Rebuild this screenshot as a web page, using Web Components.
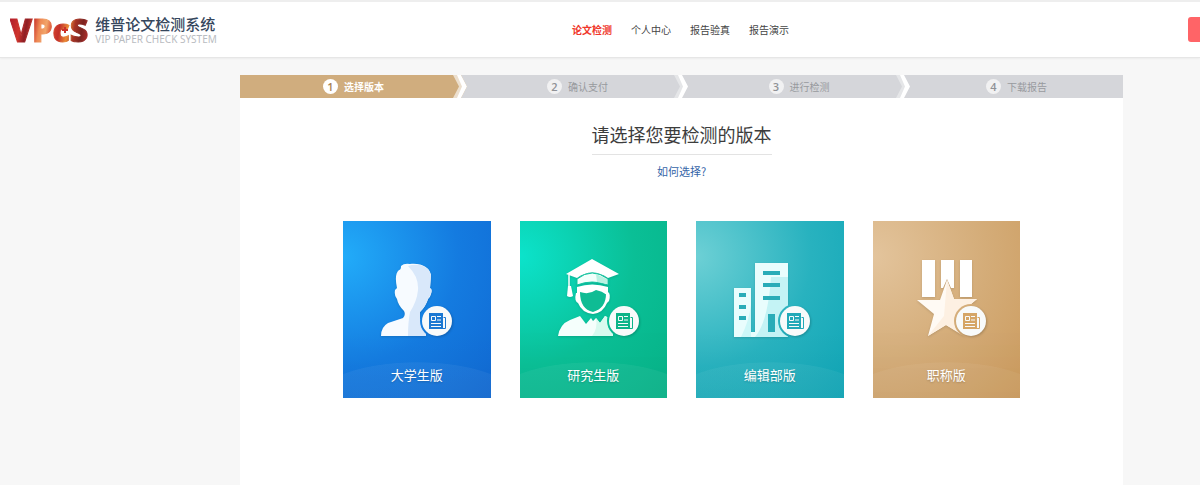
<!DOCTYPE html>
<html lang="zh-CN">
<head>
<meta charset="utf-8">
<meta name="viewport" content="width=device-width, initial-scale=1">
<title>维普论文检测系统</title>
<style>
body{margin:0;min-height:100vh;background:#f7f7f7;color:#444;font:10px/16px "Noto Sans CJK SC","Noto Sans",sans-serif}
</style>
</head>
<body>
<vp-page></vp-page>
<script>
class Base extends HTMLElement{
  constructor(){super();this.attachShadow({mode:'open'})}
  connectedCallback(){this.shadowRoot.innerHTML=this.render()}
}

class VpLogo extends Base{
  render(){return `<style>
    :host{display:block}
    a{display:flex;align-items:center;gap:7px;text-decoration:none}
    .mark{position:relative;display:flex;align-items:baseline;font:800 32px/34px "Open Sans","Noto Sans",sans-serif;
      color:transparent;-webkit-text-stroke:1px transparent;background:linear-gradient(100deg,#b3202c 3%,#d0342c 14%,#8e1f25 22%,#c9342a 30%,#ee8a55 38%,#f1a56a 46%,#d8452d 54%,#c22f2a 62%,#ea8a35 72%,#a83424 80%,#7c2420 89%,#b02d2a 98%);
      -webkit-background-clip:text;background-clip:text}
    svg{position:absolute;left:51px;top:13px;width:8px;height:8px}
    .t{display:block;font-size:15px;line-height:18px;font-weight:500;color:#35465c}
    .s{display:block;font:10px/12px "Noto Sans",sans-serif;color:#b9bcc1;white-space:nowrap}
  </style>
  <a href="#"><span class="mark">VPcS<svg viewBox="0 0 8 8" aria-hidden="true"><path d="M4 1v6M1 4h6" stroke="#cb3129" stroke-width="2"/></svg></span>
  <span><span class="t">维普论文检测系统</span><span class="s">VIP PAPER CHECK SYSTEM</span></span></a>`}
}
customElements.define('vp-logo',VpLogo);

class VpHeader extends Base{
  render(){return `<style>
    :host{display:grid;grid-template-columns:562px 1fr auto;align-items:center;box-sizing:border-box;height:58px;padding-left:10px;
      background:#fff;border-top:2px solid #eee;border-bottom:1px solid #e6e6e6;box-shadow:0 1px 2px #0000000c}
    nav{display:flex;gap:19px}
    nav a{color:#444;text-decoration:none;white-space:nowrap}
    nav a.on{color:#f0372b;font-weight:700}
    button{width:12px;height:25px;padding:0;border:0;border-radius:3px 0 0 3px;background:#ff6467}
  </style>
  <vp-logo></vp-logo>
  <nav><a class="on" href="#">论文检测</a><a href="#">个人中心</a><a href="#">报告验真</a><a href="#">报告演示</a></nav>
  <button type="button" aria-label="登录"></button>`}
}
customElements.define('vp-header',VpHeader);

class VpStep extends Base{
  render(){
    const on=this.hasAttribute('active'),last=this.hasAttribute('last');
    return `<style>
    :host{position:relative;display:flex;align-items:center;justify-content:center;gap:6px;height:23px;
      background:${on?'#d0ad7e':'#d5d6da'};color:${on?'#fff':'#989a9e'};font-weight:${on?700:400}}
    b{width:15px;height:15px;border-radius:50%;background:${on?'#fff':'#f1f1f2'};color:${on?'#a88252':'#8f9196'};
      font:600 11px/15px "Open Sans","Noto Sans",sans-serif;text-align:center}
    svg{position:absolute;right:0;top:0;width:14px;height:23px}
  </style>
  <b>${this.getAttribute('n')}</b><span><slot></slot></span>
  ${last?'':`<svg viewBox="0 0 14 23" aria-hidden="true"><path d="M8 0h6v23H8l6-11.500z" fill="#d5d6da"/><path d="M0 0h5l5 11.500L5 23H0l6-11.500z" fill="${on?'#ecdfce':'#e5e6e8'}"/><path d="M4 0h4l6 11.500L8 23H4l5-11.500z" fill="#fff"/></svg>`}`}
}
customElements.define('vp-step',VpStep);

const ART={
  student:{x:94,c:'#1b78d2',d:`
    <path d="M58 45Q61 42 67 43C79 42 86 46 88 54L87 67Q90 68 88 73Q87 77 85 78Q83 85 77 91V98L83 102V115H38Q38 106 45 102L60 97Q63 94 61 90Q55 84 54 78Q51 75 52 69L54 67Q51 53 56 49Q58 49 58 45Z" fill="#f7fbff"/>
    <path d="M65 45Q76 56 75 69Q74 80 67 91Q65 101 65 115H83V102L77 98V91Q83 85 85 78Q90 72 87 67L88 54Q86 46 77 44Q70 43 65 45Z" fill="#d9e8fa"/>`},
  graduate:{x:104,c:'#0db488',d:`
    <path d="M72 38 99 53 88 57Q72 46 57 57L46 53Z" fill="#fff"/>
    <path d="M49 54v13" stroke="#fff" stroke-width="1.500"/><path d="M48 65h3l2 10q-3 2-6 0z" fill="#fff"/>
    <path d="M57 58Q72 46 88 58V64Q72 58 57 64Z" fill="#f2fffb" stroke="#10c39e"/>
    <path d="M76 53 87 58V63L77 61Z" fill="#b9f1e1"/>
    <path d="M57 66Q72 61 88 66V71Q91 73 89 80L87 82Q83 92 73 93Q62 92 58 82Q54 80 56 72H57Z" fill="#fff"/>
    <path d="M60 71Q64 68 72 69Q79 68 83 69L86 73Q86 87 73 91Q60 88 60 71Z" fill="#0fbc94"/>
    <path d="M60 67Q66 65 72 66Q80 65 87 68L87 74Q82 70 76 69Q69 74 60 71Z" fill="#fff"/>
    <path d="M38 115Q40 103 50 99L60 95 66 103 71 97 73 100 76 97 80 102 85 95 93 99V115Z" fill="#f5fffc"/>
    <path d="M76 97 80 102 85 95 93 99V115H72Q78 108 76 97Z" fill="#d8faef"/>`},
  editor:{x:99,c:'#22a9b8',d:`
    <path d="M38 67H55V111H59V42H92V116H38Z" fill="#e9fdfd"/>
    <path d="M75 56H92V116H59Q72 101 75 56Z" fill="#c4f3f5"/>
    <path d="M55 84V116H45Q53 100 55 84Z" fill="#cdf7f8"/>
    <path d="M43 72h7v4h-7zM43 84h7v4h-7zM43 95h7v4h-7zM67 50h17v4H67zM67 62h17v4H67zM67 75h17v4H67zM72 93h7v18h-7z" fill="#29acb8"/>`},
  title:{x:98,c:'#d5a566',d:`
    <path d="M49 39H62V76H49ZM87 39H99V76H87ZM68 39H81V67H78L74 58 70 67H68Z" fill="#fff"/>
    <path d="M74 59 81 78H104L86 93 91 106 92 115 73 104 55 115 61 93 44 79H67Z" fill="#fffaf4"/>
    <path d="M74 59 81 78H104L86 93 89 114 73 104 55 115 71 95Z" fill="#fdf0e2"/>`}
};

class VpCard extends Base{
  render(){const a=ART[this.getAttribute('kind')];return `<style>
    :host{display:block}
    a{display:flex;flex-direction:column;align-items:center;box-sizing:border-box;height:177px;color:#fff;text-decoration:none;
      background:radial-gradient(ellipse 100px 36px at 50% 100%,#ffffff0c 98%,transparent 100%),
      linear-gradient(transparent 60%,#00000006),
      radial-gradient(ellipse at 0 20%,var(--from),var(--mid) 55%,var(--to) 100%)}
    svg{flex:none;width:147px;height:144px}
    span{font-size:13px;line-height:20px;text-shadow:0 1px 2px #0003}
  </style>
  <a href="#"><svg viewBox="0 0 147 144" aria-hidden="true">
    <mask id="cut"><path d="M0 0h147v144H0z" fill="#fff"/><circle cx="${a.x}" cy="100" r="17"/></mask>
    <g mask="url(#cut)"><g style="filter:drop-shadow(0 1px 1px #0002)">${a.d}</g></g>
    <circle cx="${a.x}" cy="100" r="15" fill="#f8fafa" style="filter:drop-shadow(1px 1px 1px #0003)"/>
    <g transform="translate(${a.x-8} 92)"><path d="M0 0H14V16H0Z" fill="${a.c}"/>
    <path d="M14.500 4.500H16.500V15.500H13.500" fill="none" stroke="${a.c}"/>
    <path d="M2.500 3.500h4v4h-4zM8 3.500h4M8 7h4M2 10.500h10M2 13.500h10" fill="none" stroke="#f8fafa"/></g>
  </svg><span><slot></slot></span></a>`}
}
customElements.define('vp-card',VpCard);

class VpPage extends Base{
  render(){return `<style>
    :host{display:flex;flex-direction:column;min-height:100vh}
    main{flex:1;margin:17px 77px 0 240px;background:#fff}
    .steps{display:grid;grid-template-columns:227fr 221fr 222fr 213fr}
    .head{display:flex;flex-direction:column;align-items:center;padding-top:22px}
    h1{margin:0;padding-bottom:6px;border-bottom:1px solid #e3e3e3;font-size:18px;line-height:28px;font-weight:400;color:#3c3c3c}
    .head a{margin-top:8px;font-size:11px;color:#3565a8;text-decoration:none}
    .cards{display:grid;grid-template-columns:repeat(4,1fr);gap:29px;padding:42px 103px}
    .blue{--from:#22acf9;--mid:#147be0;--to:#1068d2}
    .green{--from:#0ce3cb;--mid:#0abf96;--to:#06b287}
    .teal{--from:#6dd0d5;--mid:#28b2bf;--to:#0ea5b6}
    .gold{--from:#e3c49c;--mid:#d4ac78;--to:#cb9a5c}
  </style>
  <vp-header></vp-header>
  <main>
    <div class="steps"><vp-step n="1" active>选择版本</vp-step><vp-step n="2">确认支付</vp-step><vp-step n="3">进行检测</vp-step><vp-step n="4" last>下载报告</vp-step></div>
    <div class="head"><h1>请选择您要检测的版本</h1><a href="#">如何选择?</a></div>
    <div class="cards"><vp-card class="blue" kind="student">大学生版</vp-card><vp-card class="green" kind="graduate">研究生版</vp-card><vp-card class="teal" kind="editor">编辑部版</vp-card><vp-card class="gold" kind="title">职称版</vp-card></div>
  </main>`}
}
customElements.define('vp-page',VpPage);
</script>
</body>
</html>
